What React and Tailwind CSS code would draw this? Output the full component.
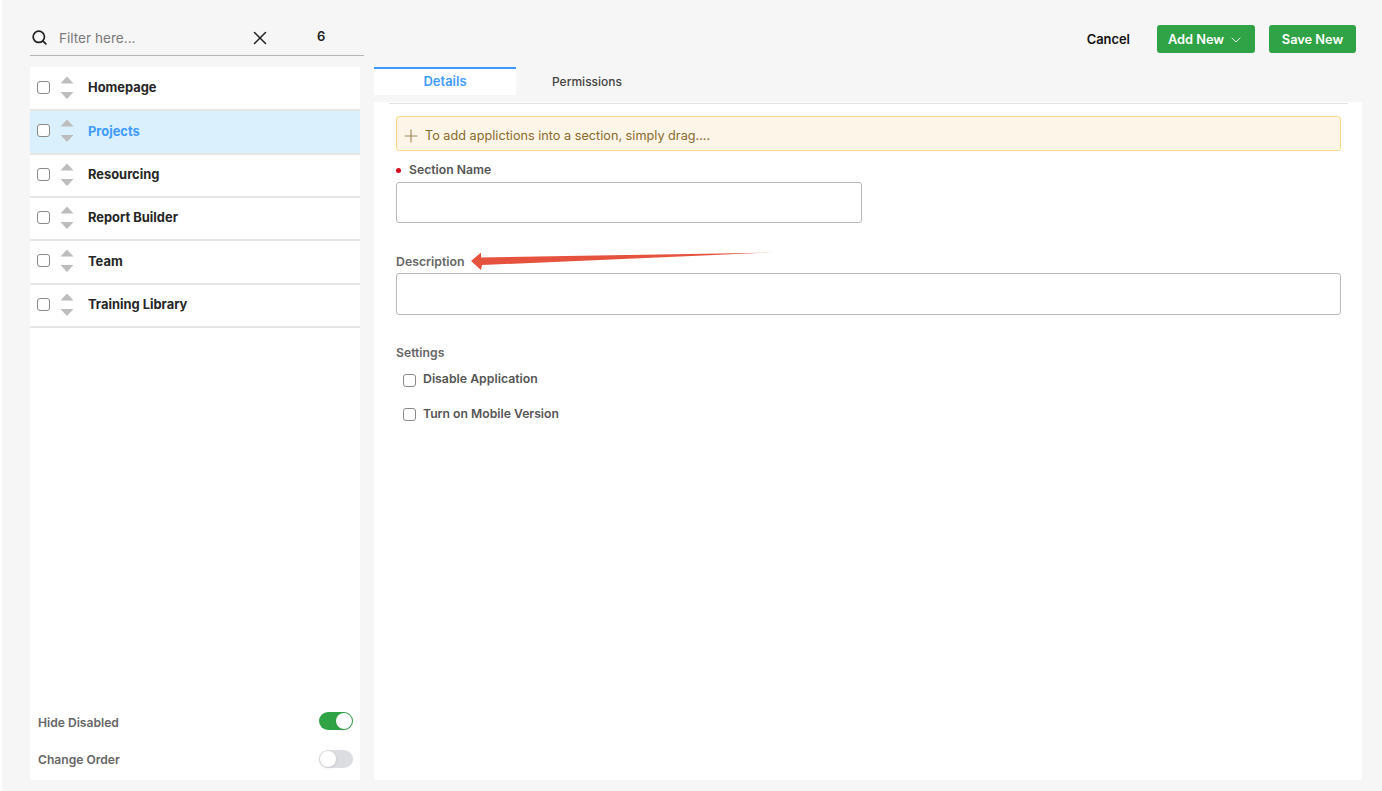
import { Search, X, Plus, ChevronDown } from "lucide-react";

const sections = [
  { name: "Homepage" },
  { name: "Projects", active: true },
  { name: "Resourcing" },
  { name: "Report Builder" },
  { name: "Team" },
  { name: "Training Library" },
];

function Checkbox() {
  return <span className="block w-[13px] h-[13px] rounded-[3px] border border-[#8a8a8a] bg-white shrink-0" />;
}

function SortArrows() {
  return (
    <svg width="14" height="24" viewBox="0 0 14 24" className="shrink-0">
      <path d="M7 0.5 L13.5 7.5 H0.5 Z" fill="#bdbdbd" />
      <path d="M7 23 L13.5 16 H0.5 Z" fill="#bdbdbd" />
    </svg>
  );
}

function Toggle({ on }) {
  return (
    <span className={`flex items-center w-[34px] h-[18px] rounded-full p-[1px] ${on ? "bg-[#2fa346] justify-end mb-[3px]" : "bg-[#dcdde0] justify-start mb-[2px]"}`}>
      <span className="block w-4 h-4 rounded-full bg-white shadow-sm" />
    </span>
  );
}

export default function App() {
  return (
    <div className="relative h-[791px] w-[1382px] overflow-hidden bg-[#f6f6f6] border-l-2 border-white font-['Inter',sans-serif] text-[#222]">
      <div className="flex h-full pl-[28px] pr-[20px] pt-[20px] pb-[11px] gap-[10px]">
        {/* left column */}
        <div className="w-[334px] flex flex-col shrink-0">
          <div className="h-[36px] flex items-center border-b border-[#b5b5b5] shrink-0">
            <Search className="w-[17px] h-[17px] text-[#222] ml-[1px]" strokeWidth={2.4} />
            <span className="ml-[11px] pt-[2px] text-[13.6px] text-[#7a7a7a] w-[190px]">Filter here...</span>
            <X className="w-[22px] h-[22px] text-[#222]" strokeWidth={1.6} />
            <span className="ml-[46px] text-[13px] font-semibold -mt-[2px]">6</span>
          </div>

          <div className="mt-[11px] pt-[1px] w-[330px] flex-1 bg-white flex flex-col">
            <div>
              {sections.map((s) => (
                <div
                  key={s.name}
                  className={`h-[43.33px] flex items-center pl-[7px] pb-[1px] border-b-2 border-[#e6e6e6] ${s.active ? "bg-[#daf1fd]" : "bg-white"}`}
                >
                  <span className="-mt-[1px]"><Checkbox /></span>
                  <span className="ml-[10px]"><SortArrows /></span>
                  <span className={`ml-[14px] text-[12.9px] font-bold ${s.active ? "text-[#3f9bff]" : "text-[#262626]"}`}>
                    {s.name}
                  </span>
                </div>
              ))}
            </div>
            <div className="mt-auto pl-[8px] pr-[7px] pb-[11px] flex flex-col gap-[19.5px]">
              <div className="flex items-center justify-between h-[18px]">
                <span className="text-[12.1px] font-semibold text-[#666] pt-[2px]">Hide Disabled</span>
                <Toggle on />
              </div>
              <div className="flex items-center justify-between h-[18px]">
                <span className="text-[12.1px] font-semibold text-[#666] pt-[1px]">Change Order</span>
                <Toggle />
              </div>
            </div>
          </div>
        </div>

        {/* right column */}
        <div className="flex-1 flex flex-col min-w-0">
          <div className="h-[36px] flex items-center justify-end gap-[27px] pr-[6px] shrink-0 mt-[1px]">
            <span className="text-[12.9px] font-semibold text-[#111] pt-[1px]">Cancel</span>
            <div className="flex items-center gap-[14px]">
              <button className="w-[98px] h-[28px] bg-[#2fa346] rounded-[3px] text-white text-[12.8px] font-semibold flex items-center justify-center gap-[4px] pt-[1px]">
                Add New <ChevronDown className="w-[16px] h-[16px]" strokeWidth={1.4} />
              </button>
              <button className="w-[87px] h-[28px] bg-[#2fa346] rounded-[3px] text-white text-[12.8px] font-semibold pt-[1px]">
                Save New
              </button>
            </div>
          </div>

          <div className="mt-[10px] flex items-stretch h-[28px] shrink-0">
            <div className="w-[142px] bg-white border-t-2 border-[#3f9bff] text-[#3f9bff] text-[13px] font-semibold flex items-center justify-center">
              Details
            </div>
            <div className="w-[142px] text-[12px] font-medium text-[#444] flex items-center justify-center pt-[1px]">
              Permissions
            </div>
          </div>

          <div className="mt-[7px] flex-1 bg-white pl-[15px] pr-[14px]">
            <div className="border-t border-[#e2e2e2] mt-[1px] pl-[7px] pr-[7px] pt-[12px]">
              <div className="h-[35px] rounded-[3px] border border-[#fbd988] bg-[#fdf5e8] flex items-center pl-[4px] pt-[4px] text-[12.7px] text-[#8a6a2b]">
                <Plus className="w-[20px] h-[20px] text-[#a08a5c]" strokeWidth={1.4} />
                <span className="ml-[4px]">To add applictions into a section, simply drag....</span>
              </div>

              <div className="mt-[12px] h-[14px] flex items-center text-[12.2px] font-semibold text-[#555]">
                <span className="block w-[5px] h-[5px] rounded-full bg-[#d9091c]" />
                <span className="ml-[8px]">Section Name</span>
              </div>
              <div className="mt-[5px] w-[466px] h-[41px] rounded-[3px] border border-[#b9b9b9] bg-white" />

              <div className="mt-[32px] h-[14px] flex items-center text-[12.3px] font-semibold text-[#666]">Description</div>
              <div className="mt-[4px] h-[42px] rounded-[3px] border border-[#b9b9b9] bg-white" />

              <div className="mt-[31px] h-[14px] flex items-center text-[12.2px] font-semibold text-[#666]">Settings</div>
              <div className="mt-[13px] ml-[7px] h-[14px] flex items-center gap-[7px] text-[12.3px] font-semibold text-[#555]">
                <Checkbox /> <span className="-mt-[2px]">Disable Application</span>
              </div>
              <div className="mt-[20px] ml-[7px] h-[14px] flex items-center gap-[7px] text-[12.2px] font-semibold text-[#555]">
                <Checkbox /> Turn on Mobile Version
              </div>
            </div>
          </div>
        </div>
      </div>

      {/* red annotation arrow */}
      <svg className="absolute left-[468px] top-[248px]" width="306" height="26" viewBox="0 0 306 26">
        <path d="M1 13 L11 4.5 L11 9.5 L302 4.5 L12 17 L11 22 Z" fill="#e5523d" />
      </svg>
    </div>
  );
}
